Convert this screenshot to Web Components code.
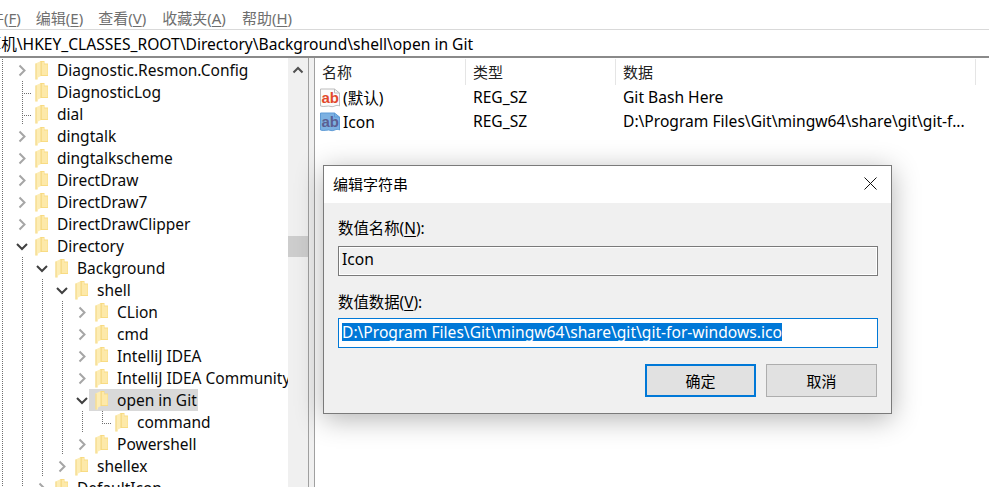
<!DOCTYPE html>
<html>
<head>
<meta charset="utf-8">
<title>注册表编辑器</title>
<style>
    html, body { margin: 0; height: 100%; overflow: hidden; background: #fff; }
    body { font-family: "Noto Sans", "Noto Sans CJK SC", sans-serif; color: #000; position: relative; }
</style>
</head>
<body>
<reg-editor></reg-editor>
<script>
const UI_FONT = '"Noto Sans", "Noto Sans CJK SC", sans-serif';

const FOLDER_SVG = `<svg width="14" height="20" viewBox="0 0 14 20">
    <path d="M5 1H9.5V3.5H13V16H5Z" fill="#f9dc83"/>
    <path d="M6.5 2H9V4.5H12.5V15H6.5Z" fill="#fde9a9"/>
    <path d="M.5 3.5L6 1V16L3 17.5V19.5H.5Z" fill="#fdedb5"/>
    <path d="M1 3.5V19.5" stroke="#f3d681"/>
    <path d="M6 1V16" stroke="#f4d67e"/>
</svg>`;

class MenuBar extends HTMLElement {
    constructor() {
        super();
        this.attachShadow({ mode: 'open' });
    }

    connectedCallback() {
        const items = [['件', 'F', -11], ['编辑', 'E', 15], ['查看', 'V', 15], ['收藏夹', 'A', 16], ['帮助', 'H', 16]];
        this.shadowRoot.innerHTML = `
            <style>
                :host {
                    display: flex;
                    align-items: center;
                    height: 30px;
                    padding-top: 6px;
                    box-sizing: border-box;
                    background: #fff;
                    border-bottom: 1px solid #d9d9d9;
                    font: 15px ${UI_FONT};
                    color: #6f6f6f;
                    white-space: nowrap;
                }
                span { display: block; }
                u { text-underline-offset: 2px; }
            </style>
            ${items.map(([name, key, gap]) => `<span style="margin-left:${gap}px">${name}(<u>${key}</u>)</span>`).join('')}
        `;
    }
}

class AddressBar extends HTMLElement {
    constructor() {
        super();
        this.attachShadow({ mode: 'open' });
    }

    connectedCallback() {
        this.shadowRoot.innerHTML = `
            <style>
                :host {
                    display: flex;
                    align-items: center;
                    height: 26px;
                    background: #fff;
                    border-bottom: 2px solid #8a8a8a;
                    overflow: hidden;
                    font: 15.6px ${UI_FONT};
                    white-space: nowrap;
                }
                div { margin-left: -30px; }
            </style>
            <div><slot></slot></div>
        `;
    }
}

class TreeRow extends HTMLElement {
    constructor() {
        super();
        this.attachShadow({ mode: 'open' });
    }

    // cells: v = dotted line, r/d = chevron right/down, t = tee, l = corner
    _cell(kind) {
        let inner = '';
        const dots = 'fill="none" stroke="#707070" stroke-dasharray="1 1" shape-rendering="crispEdges"';
        if (kind === 'v') inner = `<path d="M10.5 0V22" ${dots}/>`;
        if (kind === 't') inner = `<path d="M10.5 0V22M12 12.5H19" ${dots}/>`;
        if (kind === 'l') inner = `<path d="M10.5 0V12.5H19" ${dots}/>`;
        if (kind === 'r') inner = `<path d="M7.5 6.5L12.5 11.5L7.5 16.5" fill="none" stroke="#a6a6a6" stroke-width="2"/>`;
        if (kind === 'd') inner = `<path d="M5 9L10 14L15 9" fill="none" stroke="#404040" stroke-width="2"/>`;
        return `<svg width="20" height="22" viewBox="0 0 20 22">${inner}</svg>`;
    }

    connectedCallback() {
        const cells = (this.getAttribute('cells') || '').split('');
        const selected = this.hasAttribute('selected');
        this.shadowRoot.innerHTML = `
            <style>
                :host { display: flex; height: 22px; margin-left: -8px; white-space: nowrap; }
                svg { display: block; flex: none; }
                .folder { margin: 1px 0 0 3px; }
                .item { display: flex; margin-left: -3px; padding: 0 0 0 3px; height: 22px; }
                .item.sel { background: #d9d9d9; }
                .label { margin-left: 8px; padding-right: 1px; line-height: 23px; }
            </style>
            ${cells.map(c => this._cell(c)).join('')}
            <div class="item ${selected ? 'sel' : ''}">
                <div class="folder">${FOLDER_SVG}</div>
                <div class="label"><slot></slot></div>
            </div>
        `;
    }
}

class TreePane extends HTMLElement {
    constructor() {
        super();
        this.attachShadow({ mode: 'open' });
    }

    connectedCallback() {
        this.shadowRoot.innerHTML = `
            <style>
                :host {
                    display: flex;
                    flex: none;
                    width: 309px;
                    height: 100%;
                    box-sizing: border-box;
                    border-right: 1px solid #a0a0a0;
                    overflow: hidden;
                    background: #fff;
                    font: 15.5px ${UI_FONT};
                    color: #0a0a0a;
                }
                .rows { flex: none; width: 288px; padding-top: 1px; overflow: hidden; }
                .bar { flex: none; width: 20px; background: #f0f0f0; }
                .up { height: 22px; display: flex; justify-content: center; padding-top: 8px; box-sizing: border-box; }
                .track { height: 156px; }
                .thumb { height: 21px; background: #cdcdcd; }
            </style>
            <div class="rows"><slot></slot></div>
            <div class="bar">
                <div class="up">
                    <svg width="12" height="8" viewBox="0 0 12 8"><path d="M1.5 6.5L6 2L10.5 6.5" fill="none" stroke="#505050" stroke-width="2"/></svg>
                </div>
                <div class="track"></div>
                <div class="thumb"></div>
            </div>
        `;
    }
}

class ValueIcon extends HTMLElement {
    constructor() {
        super();
        this.attachShadow({ mode: 'open' });
    }

    connectedCallback() {
        const blue = this.getAttribute('tone') === 'blue';
        const fill = blue ? '#7db1e2' : '#fbfbfb';
        const edge = blue ? '#5e9bd6' : '#bdbdbd';
        const ink = blue ? '#5b5f92' : '#e2492b';
        this.shadowRoot.innerHTML = `
            <style>
                :host { display: block; flex: none; width: 20px; height: 20px; }
                svg { display: block; }
                text { font: bold 15px "Liberation Sans", sans-serif; }
            </style>
            <svg width="20" height="20" viewBox="0 0 20 20">
                <path d="M.5 1H14.5L19.5 5V18C16 16 14 19.5 11 18.5C8 17 4 19.5 .5 18Z" fill="${fill}" stroke="${edge}"/>
                <path d="M14.5 1V5H19.5" fill="none" stroke="${edge}"/>
                <text x="1.5" y="14.5" fill="${ink}">ab</text>
            </svg>
        `;
    }
}

class ValueList extends HTMLElement {
    constructor() {
        super();
        this.attachShadow({ mode: 'open' });
    }

    connectedCallback() {
        this.shadowRoot.innerHTML = `
            <style>
                :host {
                    display: block;
                    flex: 1;
                    height: 100%;
                    box-sizing: border-box;
                    border-left: 1px solid #a0a0a0;
                    margin-left: 5px;
                    background: #fff;
                    font: 15.6px ${UI_FONT};
                    white-space: nowrap;
                }
                .grid { display: grid; grid-template-columns: 151px 150px 360px 20px; }
                .head { line-height: 27px; padding-left: 7px; border-right: 1px solid #e5e5e5; margin-top: 1px; height: 26px; color: #222; font-size: 15px; }
                .head.plain { border: 0; }
                .cell { height: 24px; line-height: 23px; padding-left: 7px; }
                .name { display: flex; align-items: center; gap: 3px; padding-left: 5px; }
            </style>
            <div class="grid">
                <div class="head">名称</div>
                <div class="head">类型</div>
                <div class="head">数据</div>
                <div class="head plain"></div>
            </div>
            <div class="grid" style="margin-top:1px">
                <div class="cell name"><value-icon></value-icon>(默认)</div>
                <div class="cell">REG_SZ</div>
                <div class="cell">Git Bash Here</div>
                <div></div>
                <div class="cell name"><value-icon tone="blue"></value-icon>Icon</div>
                <div class="cell">REG_SZ</div>
                <div class="cell">D:\\Program Files\\Git\\mingw64\\share\\git\\git-f...</div>
                <div></div>
            </div>
        `;
    }
}

class EditStringDialog extends HTMLElement {
    constructor() {
        super();
        this.attachShadow({ mode: 'open' });
    }

    connectedCallback() {
        this.shadowRoot.innerHTML = `
            <style>
                :host {
                    position: absolute;
                    left: 323px;
                    top: 165px;
                    width: 569px;
                    height: 249px;
                    box-sizing: border-box;
                    display: flex;
                    flex-direction: column;
                    border: 1px solid #7a7a7a;
                    background: #f0f0f0;
                    box-shadow: 0 5px 26px rgba(0,0,0,0.3);
                    font: 15.6px ${UI_FONT};
                    white-space: nowrap;
                }
                .title {
                    flex: none;
                    height: 37px;
                    display: flex;
                    align-items: center;
                    justify-content: space-between;
                    padding: 0 14px 2px 9px;
                    box-sizing: border-box;
                    background: #fff;
                    font-size: 15px;
                }
                .body {
                    display: flex;
                    flex-direction: column;
                    padding: 15px 13px 0 14px;
                }
                label { display: block; height: 20px; line-height: 21px; font-size: 15.4px; }
                u { text-underline-offset: 2px; }
                .field {
                    box-sizing: border-box;
                    height: 30px;
                    margin-top: 8px;
                    line-height: 25px;
                    padding: 0 3px;
                    border: 1px solid #7a7a7a;
                    box-shadow: inset 0 0 0 1px #fff;
                    overflow: hidden;
                }
                .field.ro { background: #f0f0f0; margin-bottom: 16px; }
                .field.edit { background: #fff; border-color: #0078d7; box-shadow: none; margin-top: 6px; }
                .sel {
                    display: inline-block;
                    height: 18px;
                    line-height: 18px;
                    margin-top: 4px;
                    vertical-align: top;
                    background: #0078d7;
                    color: #fff;
                }
                .actions { display: flex; justify-content: flex-end; gap: 10px; margin: 16px 1px 0 0; }
                button {
                    box-sizing: border-box;
                    width: 111px;
                    height: 33px;
                    padding: 0;
                    background: #e1e1e1;
                    border: 1px solid #adadad;
                    font: 15px ${UI_FONT};
                    color: #000;
                }
                button.primary { border: 2px solid #0078d7; }
            </style>
            <div class="title">
                <span>编辑字符串</span>
                <svg width="13" height="13" viewBox="0 0 13 13"><path d="M.5 .5L12.5 12.5M12.5 .5L.5 12.5" stroke="#111" stroke-width="1" fill="none"/></svg>
            </div>
            <div class="body">
                <label>数值名称(<u>N</u>):</label>
                <div class="field ro">Icon</div>
                <label>数值数据(<u>V</u>):</label>
                <div class="field edit"><span class="sel">D:\\Program Files\\Git\\mingw64\\share\\git\\git-for-windows.ico</span></div>
                <div class="actions">
                    <button class="primary">确定</button>
                    <button>取消</button>
                </div>
            </div>
        `;
    }
}

class RegEditor extends HTMLElement {
    constructor() {
        super();
        this.attachShadow({ mode: 'open' });
    }

    connectedCallback() {
        this.shadowRoot.innerHTML = `
            <style>
                :host { display: flex; flex-direction: column; height: 487px; overflow: hidden; background: #fff; }
                .split { flex: 1; min-height: 0; display: flex; background: #f0f0f0; }
            </style>
            <menu-bar></menu-bar>
            <address-bar>计算机\\HKEY_CLASSES_ROOT\\Directory\\Background\\shell\\open in Git</address-bar>
            <div class="split">
                <tree-pane><slot></slot></tree-pane>
                <value-list></value-list>
            </div>
            <edit-string-dialog></edit-string-dialog>
        `;
        const rows = [
            ['vr', 'Diagnostic.Resmon.Config'],
            ['vt', 'DiagnosticLog'],
            ['vt', 'dial'],
            ['vr', 'dingtalk'],
            ['vr', 'dingtalkscheme'],
            ['vr', 'DirectDraw'],
            ['vr', 'DirectDraw7'],
            ['vr', 'DirectDrawClipper'],
            ['vd', 'Directory'],
            ['vvd', 'Background'],
            ['vvvd', 'shell'],
            ['vvvvr', 'CLion'],
            ['vvvvr', 'cmd'],
            ['vvvvr', 'IntelliJ IDEA'],
            ['vvvvr', 'IntelliJ IDEA Community'],
            ['vvvvd', 'open in Git', true],
            ['vvvvvl', 'command'],
            ['vvvvr', 'Powershell'],
            ['vvvr', 'shellex'],
            ['vvr', 'DefaultIcon']
        ];
        this.innerHTML = rows.map(([cells, name, sel]) =>
            `<tree-row cells="${cells}"${sel ? ' selected' : ''}>${name}</tree-row>`).join('');
    }
}

customElements.define('menu-bar', MenuBar);
customElements.define('address-bar', AddressBar);
customElements.define('tree-row', TreeRow);
customElements.define('tree-pane', TreePane);
customElements.define('value-icon', ValueIcon);
customElements.define('value-list', ValueList);
customElements.define('edit-string-dialog', EditStringDialog);
customElements.define('reg-editor', RegEditor);
</script>
</body>
</html>
